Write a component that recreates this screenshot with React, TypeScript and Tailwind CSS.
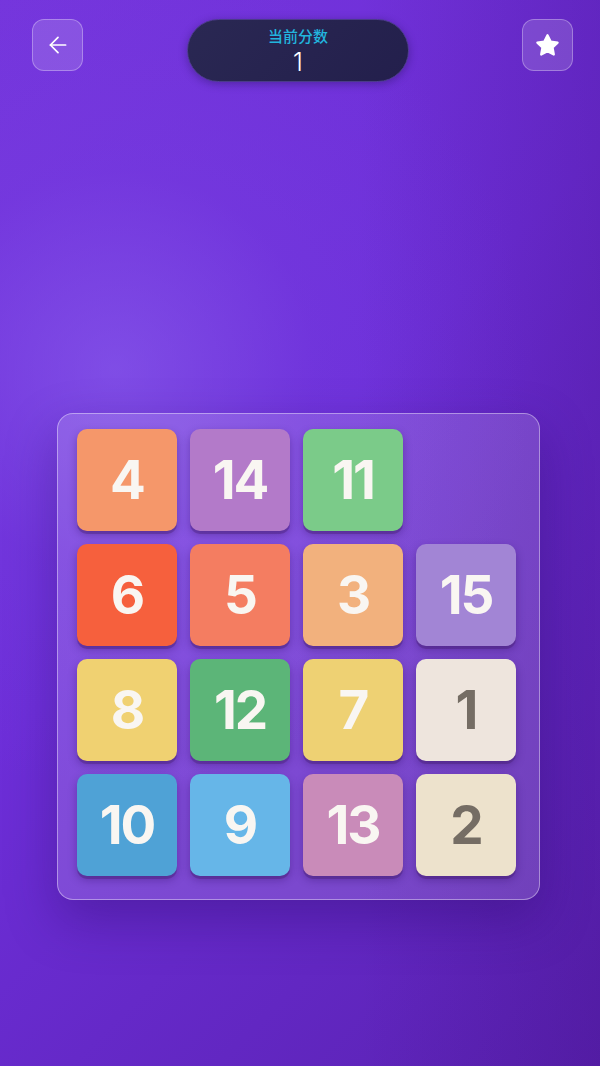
import React from "react";

const tiles: { n: number | null; bg: string; dark?: boolean }[] = [
  { n: 4, bg: "bg-[#f5976a]" },
  { n: 14, bg: "bg-[#b37ac9]" },
  { n: 11, bg: "bg-[#7bcb89]" },
  { n: null, bg: "" },
  { n: 6, bg: "bg-[#f6603d]" },
  { n: 5, bg: "bg-[#f47d61]" },
  { n: 3, bg: "bg-[#f2b17d]" },
  { n: 15, bg: "bg-[#a285d5]" },
  { n: 8, bg: "bg-[#f0d171]" },
  { n: 12, bg: "bg-[#5cb578]" },
  { n: 7, bg: "bg-[#eed173]" },
  { n: 1, bg: "bg-[#eee5dd]", dark: true },
  { n: 10, bg: "bg-[#4fa2d6]" },
  { n: 9, bg: "bg-[#66b6e8]" },
  { n: 13, bg: "bg-[#c98bb9]" },
  { n: 2, bg: "bg-[#ede2cc]", dark: true },
];

export default function App() {
  return (
    <div
      className="relative w-[600px] h-[1066px] overflow-hidden bg-[linear-gradient(135deg,#7535dc_0%,#6d2ed8_45%,#5a22b2_100%)]"
      style={{ fontFamily: "Inter, 'Noto Sans CJK SC', sans-serif" }}
    >
      <div className="absolute inset-0 bg-[radial-gradient(circle_at_115px_370px,rgba(140,100,240,0.55)_0%,rgba(120,70,230,0.25)_200px,rgba(0,0,0,0)_420px)]" />
      <div className="absolute inset-0 bg-[linear-gradient(90deg,rgba(0,0,0,0)_60%,rgba(60,10,120,0.25)_100%)]" />
      <div className="relative flex flex-col items-start">
        <div className="flex items-start pl-[32px] pt-[19px]">
          <button className="w-[51px] h-[52px] rounded-[12px] bg-white/15 border border-white/30 flex items-center justify-center">
            <svg width="26" height="26" viewBox="0 0 24 24" fill="none" stroke="white" strokeWidth="1.6" strokeLinecap="round" strokeLinejoin="round">
              <path d="M19 12H5" />
              <path d="M12 19l-7-7 7-7" />
            </svg>
          </button>
          <div className="ml-[104px] w-[222px] h-[63px] rounded-full bg-[linear-gradient(135deg,#2a2853,#231f4c)] border border-[#4b3a8a] flex flex-col items-center pt-[7px] shadow-[0_2px_8px_rgba(20,10,60,0.35)]">
            <div className="text-[15px] leading-[20px] text-[#22b5de] font-medium">当前分数</div>
            <div className="text-[25px] leading-[28px] text-white font-light mt-[1px]">1</div>
          </div>
          <button className="ml-[113px] w-[51px] h-[52px] rounded-[12px] bg-white/15 border border-white/30 flex items-center justify-center">
            <svg width="27" height="27" viewBox="0 0 24 24" fill="white" stroke="white" strokeWidth="2" strokeLinejoin="round">
              <path d="M12 2.8l2.8 5.7 6.2.9-4.5 4.4 1.1 6.2L12 17.1 6.4 20l1.1-6.2L3 9.4l6.2-.9z" />
            </svg>
          </button>
        </div>

        <div className="ml-[57px] mt-[331px] w-[483px] rounded-[16px] bg-white/15 border border-white/40 pl-[19px] pr-[23px] pt-[15px] pb-[23px] shadow-[0_20px_50px_rgba(40,10,100,0.35)]">
          <div className="grid grid-cols-4 gap-x-[13px] gap-y-[13px]">
            {tiles.map((t, i) =>
              t.n === null ? (
                <div key={i} className="w-[100px] h-[102px]" />
              ) : (
                <div
                  key={i}
                  className={`w-[100px] h-[102px] rounded-[10px] ${t.bg} flex items-center justify-center shadow-[0_3px_0_rgba(70,30,110,0.35),0_4px_8px_rgba(40,10,90,0.35)]`}
                >
                  <span
                    className={`text-[53px] font-bold leading-none tracking-[-2px] ${t.dark ? "text-[#756d64]" : "text-[#f9f6f2]"}`}
                  >
                    {t.n}
                  </span>
                </div>
              )
            )}
          </div>
        </div>
      </div>
    </div>
  );
}
